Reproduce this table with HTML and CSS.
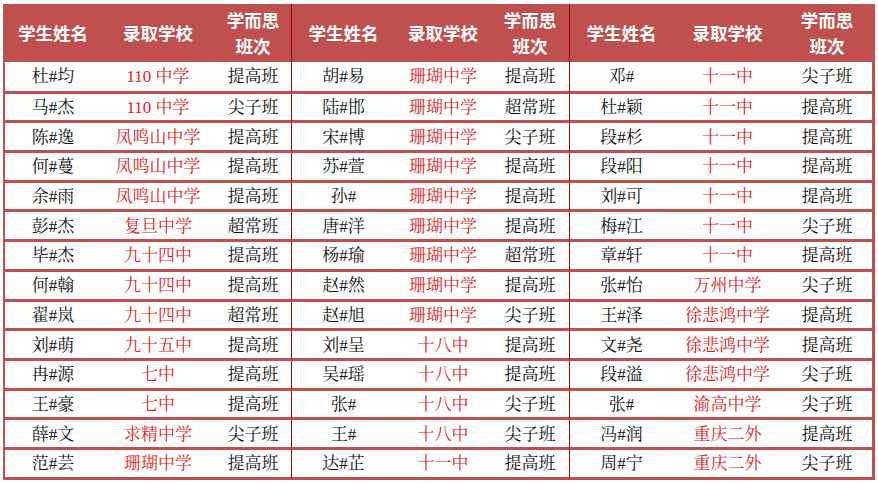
FILE: index.html
```html
<!DOCTYPE html>
<html lang="zh-CN">
<head>
<meta charset="utf-8">
<title>录取名单</title>
<link rel="stylesheet" href="styles.css">
</head>
<body>
<table class="sheet">
  <colgroup>
    <col class="c-n1"><col class="c-s1"><col class="c-k1">
    <col class="c-n2"><col class="c-s2"><col class="c-k2">
    <col class="c-n3"><col class="c-s3"><col class="c-k3">
  </colgroup>
  <thead>
    <tr class="head">
      <th>学生姓名</th><th>录取学校</th><th class="div">学而思<br>班次</th>
      <th>学生姓名</th><th>录取学校</th><th class="div">学而思<br>班次</th>
      <th>学生姓名</th><th>录取学校</th><th>学而思<br>班次</th>
    </tr>
  </thead>
  <tbody>
    <tr class="first"><td>杜#均</td><td class="sch">110 中学</td><td class="div">提高班</td><td>胡#易</td><td class="sch">珊瑚中学</td><td class="div">提高班</td><td>邓#</td><td class="sch">十一中</td><td>尖子班</td></tr>
    <tr><td>马#杰</td><td class="sch">110 中学</td><td class="div">尖子班</td><td>陆#邯</td><td class="sch">珊瑚中学</td><td class="div">超常班</td><td>杜#颖</td><td class="sch">十一中</td><td>提高班</td></tr>
    <tr><td>陈#逸</td><td class="sch">凤鸣山中学</td><td class="div">提高班</td><td>宋#博</td><td class="sch">珊瑚中学</td><td class="div">尖子班</td><td>段#杉</td><td class="sch">十一中</td><td>提高班</td></tr>
    <tr><td>何#蔓</td><td class="sch">凤鸣山中学</td><td class="div">提高班</td><td>苏#萱</td><td class="sch">珊瑚中学</td><td class="div">提高班</td><td>段#阳</td><td class="sch">十一中</td><td>提高班</td></tr>
    <tr><td>余#雨</td><td class="sch">凤鸣山中学</td><td class="div">提高班</td><td>孙#</td><td class="sch">珊瑚中学</td><td class="div">提高班</td><td>刘#可</td><td class="sch">十一中</td><td>提高班</td></tr>
    <tr><td>彭#杰</td><td class="sch">复旦中学</td><td class="div">超常班</td><td>唐#洋</td><td class="sch">珊瑚中学</td><td class="div">提高班</td><td>梅#江</td><td class="sch">十一中</td><td>尖子班</td></tr>
    <tr><td>毕#杰</td><td class="sch">九十四中</td><td class="div">提高班</td><td>杨#瑜</td><td class="sch">珊瑚中学</td><td class="div">超常班</td><td>章#轩</td><td class="sch">十一中</td><td>提高班</td></tr>
    <tr><td>何#翰</td><td class="sch">九十四中</td><td class="div">提高班</td><td>赵#然</td><td class="sch">珊瑚中学</td><td class="div">提高班</td><td>张#怡</td><td class="sch">万州中学</td><td>尖子班</td></tr>
    <tr><td>翟#岚</td><td class="sch">九十四中</td><td class="div">超常班</td><td>赵#旭</td><td class="sch">珊瑚中学</td><td class="div">尖子班</td><td>王#泽</td><td class="sch">徐悲鸿中学</td><td>提高班</td></tr>
    <tr><td>刘#萌</td><td class="sch">九十五中</td><td class="div">提高班</td><td>刘#呈</td><td class="sch">十八中</td><td class="div">提高班</td><td>文#尧</td><td class="sch">徐悲鸿中学</td><td>提高班</td></tr>
    <tr><td>冉#源</td><td class="sch">七中</td><td class="div">提高班</td><td>吴#瑶</td><td class="sch">十八中</td><td class="div">提高班</td><td>段#溢</td><td class="sch">徐悲鸿中学</td><td>尖子班</td></tr>
    <tr><td>王#豪</td><td class="sch">七中</td><td class="div">提高班</td><td>张#</td><td class="sch">十八中</td><td class="div">尖子班</td><td>张#</td><td class="sch">渝高中学</td><td>尖子班</td></tr>
    <tr><td>薛#文</td><td class="sch">求精中学</td><td class="div">尖子班</td><td>王#</td><td class="sch">十八中</td><td class="div">尖子班</td><td>冯#润</td><td class="sch">重庆二外</td><td>提高班</td></tr>
    <tr><td>范#芸</td><td class="sch">珊瑚中学</td><td class="div">提高班</td><td>达#芷</td><td class="sch">十一中</td><td class="div">提高班</td><td>周#宁</td><td class="sch">重庆二外</td><td>尖子班</td></tr>
  </tbody>
</table>
</body>
</html>
```

FILE: styles.css
```css
html, body {
  margin: 0;
  padding: 0;
  background: #ffffff;
}

.sheet {
  margin: 4px 0 0 3px;
  width: 872px;
  table-layout: fixed;
  border-collapse: separate;
  border-spacing: 0;
  border-left: 2px solid #c0504d;
  border-right: 3px solid #c0504d;
  font-family: "Liberation Serif", "Noto Serif CJK SC", "Noto Sans CJK SC", serif;
  font-size: 17px;
  color: #111111;
}

.c-n1 { width: 96px; }
.c-s1 { width: 114px; }
.c-k1 { width: 77px; }
.c-n2 { width: 103px; }
.c-s2 { width: 96px; }
.c-k2 { width: 79px; }
.c-n3 { width: 103px; }
.c-s3 { width: 109px; }
.c-k3 { width: 90px; }

.head {
  height: 58px;
}

.head th {
  background: #c0504d;
  color: #ffffff;
  font-family: "Noto Sans CJK SC", "Liberation Sans", sans-serif;
  font-weight: 700;
  font-size: 17.5px;
  line-height: 26px;
  padding: 0;
  text-align: center;
  vertical-align: middle;
}

tbody tr {
  height: 29.7px;
}

tbody tr.first {
  height: 31.7px;
}

tbody td {
  padding: 2px 0 0 0;
  text-align: center;
  vertical-align: middle;
  line-height: 20px;
  border-bottom: 3px solid #c0504d;
  white-space: nowrap;
}

.sheet .div {
  border-right: 1px solid #a80000;
}

.sch {
  color: #e31b1b;
}
```
